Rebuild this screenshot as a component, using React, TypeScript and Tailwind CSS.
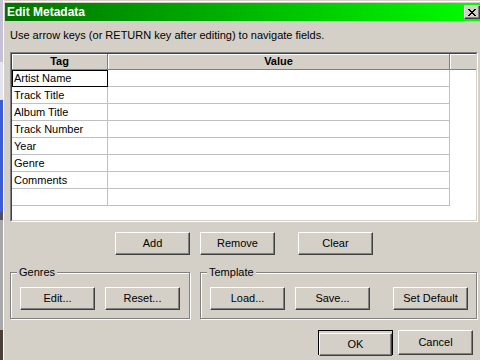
import type { ReactNode } from "react";

const tags = ["Artist Name", "Track Title", "Album Title", "Track Number", "Year", "Genre", "Comments", ""];

function Btn({
  children,
  className = "",
  isDefault = false,
}: {
  children: ReactNode;
  className?: string;
  isDefault?: boolean;
}) {
  if (isDefault) {
    return (
      <div className={`h-[25px] w-[75px] border border-black ${className}`}>
        <button className="w-full h-full bg-[#d4d0c8] border border-t-white border-l-white border-r-[#404040] border-b-[#404040] shadow-[inset_-1px_-1px_0_#808080] text-[11px] text-black leading-none">
          {children}
        </button>
      </div>
    );
  }
  return (
    <button
      className={`h-[23px] w-[75px] shrink-0 bg-[#d4d0c8] border border-t-white border-l-white border-r-[#404040] border-b-[#404040] shadow-[inset_-1px_-1px_0_#808080] text-[11px] text-black leading-none ${className}`}
    >
      {children}
    </button>
  );
}

function Group({ label, className = "", children }: { label: string; className?: string; children: ReactNode }) {
  return (
    <div
      className={`relative h-[47px] border border-[#808080] shadow-[inset_1px_1px_0_#fff,1px_1px_0_#fff] pt-[14px] pl-[9px] pr-[8px] flex gap-[10px] ${className}`}
    >
      <span className="absolute left-[6px] -top-[8px] px-[2px] bg-[#d4d0c8] text-[11px] leading-[14px]">{label}</span>
      {children}
    </div>
  );
}

export default function App() {
  return (
    <div className="w-[480px] h-[360px] overflow-hidden flex bg-[#d4d0c8] font-['Liberation_Sans',Arial,sans-serif] text-black">
      {/* desktop peeking out on the left */}
      <div className="w-[3px] h-full flex flex-col shrink-0">
        <div className="h-[62px] bg-[#c4c2d4]" />
        <div className="h-[38px] bg-[#e4e4ee]" />
        <div className="h-[112px] bg-[#3d5ad6]" />
        <div className="h-[8px] bg-[#505060]" />
        <div className="h-[110px] bg-[#a8a8a8]" />
        <div className="flex-1 bg-[#4a4038]" />
      </div>

      <div className="flex-1 flex flex-col border-l border-white pl-[1px] pt-[3px] shadow-[inset_0_1px_0_#d4d0c8,inset_0_2px_0_#fff]">
        {/* title bar */}
        <div className="h-[18px] flex items-center justify-between bg-gradient-to-r from-[#007300] to-[#00ff00]">
          <span className="pl-[2px] text-[12px] font-bold text-white leading-none">Edit Metadata</span>
          <button className="w-[16px] h-[14px] flex items-center justify-center bg-[#d4d0c8] border border-t-white border-l-white border-r-[#404040] border-b-[#404040] shadow-[inset_-1px_-1px_0_#808080]">
            <svg width="8" height="7" viewBox="0 0 8 7" shapeRendering="crispEdges">
              <path d="M0 0h2v1h-2zM6 0h2v1h-2zM1 1h2v1h-2zM5 1h2v1h-2zM2 2h4v1h-4zM3 3h2v1h-2zM2 4h4v1h-4zM1 5h2v1h-2zM5 5h2v1h-2zM0 6h2v1h-2zM6 6h2v1h-2z" fill="#000" />
            </svg>
          </button>
        </div>

        {/* body */}
        <div className="flex flex-col pl-[5px] pr-[2px] pt-[7px]">
          <p className="text-[11px] leading-[14px]">Use arrow keys (or RETURN key after editing) to navigate fields.</p>

          {/* table */}
          <div className="mt-[10px] h-[170px] border border-t-[#808080] border-l-[#808080] border-b-white border-r-white">
            <div className="h-full border border-t-[#404040] border-l-[#404040] border-b-[#d4d0c8] border-r-[#d4d0c8] bg-white flex flex-col">
              <div className="h-[16px] flex bg-[#d4d0c8] text-[11px] font-bold leading-none">
                <div className="w-[96px] flex items-center justify-center border-r border-b border-[#808080] shadow-[inset_1px_1px_0_#fff]">Tag</div>
                <div className="w-[342px] flex items-center justify-center border-r border-b border-[#808080] shadow-[inset_1px_1px_0_#fff]">Value</div>
                <div className="flex-1 border-b border-[#808080] shadow-[inset_1px_1px_0_#fff]" />
              </div>
              {tags.map((t, i) => (
                <div key={i} className="h-[17px] flex text-[11px]">
                  <div
                    className={`w-[96px] flex items-center pl-[2px] border-r border-b ${
                      i === 0 ? "border-black shadow-[inset_1px_1px_0_#000]" : "border-[#c0c0c0]"
                    }`}
                  >
                    {t}
                  </div>
                  <div className="w-[342px] border-r border-b border-[#c0c0c0]" />
                </div>
              ))}
            </div>
          </div>

          {/* add / remove / clear */}
          <div className="mt-[10px] flex">
            <Btn className="ml-[105px]">Add</Btn>
            <Btn className="ml-[10px]">Remove</Btn>
            <Btn className="ml-[23px]">Clear</Btn>
          </div>

          {/* groups */}
          <div className="mt-[17px] flex gap-[10px] pr-[1px]">
            <Group label="Genres" className="w-[180px]">
              <Btn>Edit...</Btn>
              <Btn>Reset...</Btn>
            </Group>
            <Group label="Template" className="flex-1">
              <Btn>Load...</Btn>
              <Btn>Save...</Btn>
              <Btn className="ml-auto">Set Default</Btn>
            </Group>
          </div>

          {/* ok / cancel */}
          <div className="mt-[11px] flex justify-end gap-[5px] pr-[5px]">
            <Btn isDefault>OK</Btn>
            <Btn className="h-[25px]">Cancel</Btn>
          </div>
        </div>
      </div>
    </div>
  );
}
